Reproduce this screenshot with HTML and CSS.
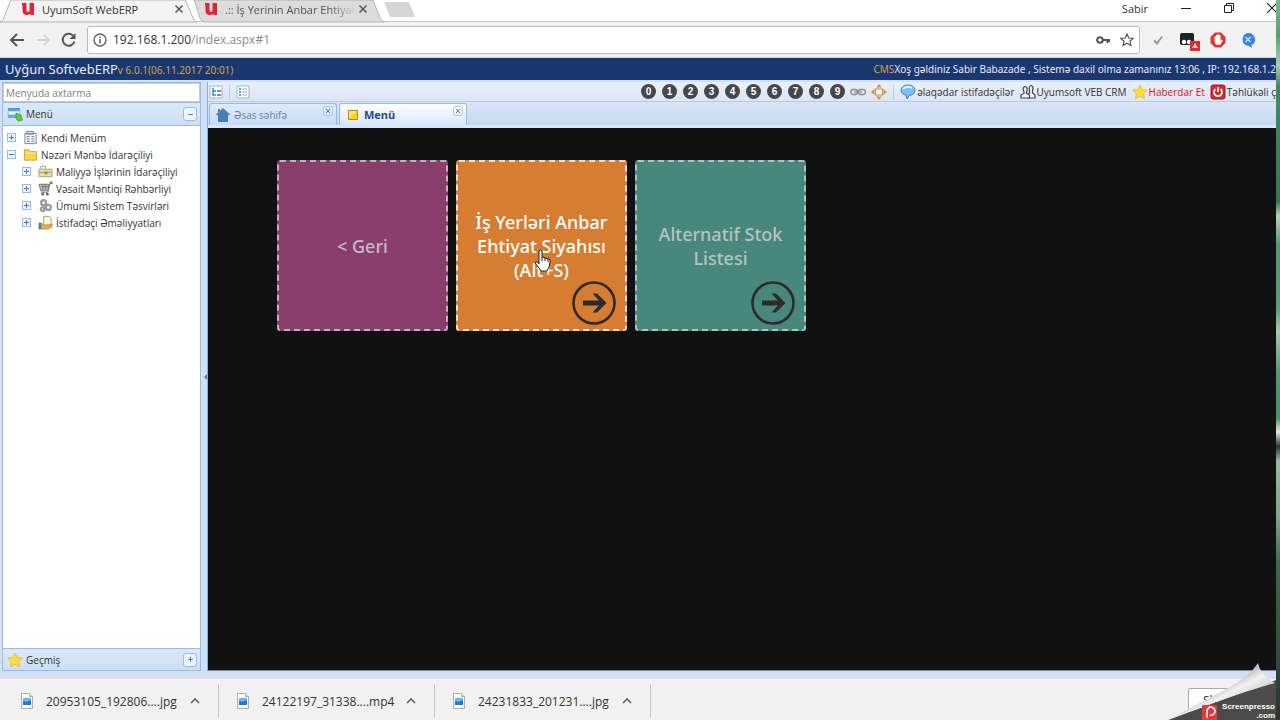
FILE: index.html
```
<!DOCTYPE html>
<html lang="az">
<head>
    <meta charset="UTF-8">
    <meta name="viewport" content="width=device-width, initial-scale=1.0">
    <title>UyumSoft WebERP</title>
    <link rel="stylesheet" href="styles.css">
</head>
<body>
    <!-- Shared icons -->
    <svg class="sprite" aria-hidden="true">
        <symbol id="logo-u" viewBox="0 0 14 14">
            <path d="M1 1h4.500v7q0 2 1.500 2t1.500-2V1H13v12H9.500v-1.500Q8.500 13 6 13 1.500 13 1.500 8.500V3.500H1z" fill="currentColor"/>
        </symbol>
        <symbol id="close" viewBox="0 0 10 10">
            <path d="M1.500 1.500l7 7m0-7l-7 7" stroke="currentColor" stroke-width="1.500"/>
        </symbol>
        <symbol id="chevron" viewBox="0 0 10 6">
            <path d="M1 5l4-4 4 4" fill="none" stroke="#5f6368" stroke-width="1.600"/>
        </symbol>
        <symbol id="star" viewBox="0 0 16 16">
            <path d="M8 1l2.200 4.500 5 .7-3.600 3.500.9 5L8 12.300l-4.500 2.400.9-5L.8 6.200l5-.7z" fill="#ffdf2e" stroke="#e8b93c" stroke-width=".8" stroke-linejoin="round"/>
        </symbol>
        <symbol id="arrow-circle" viewBox="0 0 44 44">
            <circle cx="22" cy="22" r="20.500" fill="none" stroke="#2c2b2a" stroke-width="2.600"/>
            <path d="M11 19.500h16L20.500 12.500h4.500l9.500 9.500-9.500 9.500h-4.500l6.500-7H11z" fill="#2c2b2a"/>
        </symbol>
        <symbol id="file" viewBox="0 0 14 16">
            <path d="M1.500.5h8l3 3v12h-11z" fill="#fff" stroke="#a6adb5"/>
            <path d="M9.500.5v3h3" fill="#e4e8ec" stroke="#a6adb5"/>
            <path d="M3 5h8v7H3z" fill="#1f78cf"/>
            <path d="M3 5h8v2l-4 2-4-1z" fill="#6bb5f0"/>
        </symbol>
    </svg>

    <div class="window">
        <!-- Browser tabs -->
        <header class="tab-strip">
            <div class="browser-tab active">
                <svg class="tab-shape" viewBox="0 0 200 22" preserveAspectRatio="none"><path d="M0 22q3-1 4-4L11 0h180l8 18q1 3 4 4z" fill="#f3f3f3" stroke="#b4b4b4"/></svg>
                <svg class="logo"><use href="#logo-u"/></svg>
                <a href="#1">UyumSoft WebERP</a>
                <button class="tab-close" aria-label="Close"><svg><use href="#close"/></svg></button>
            </div>
            <div class="browser-tab">
                <svg class="tab-shape" viewBox="0 0 190 22" preserveAspectRatio="none"><path d="M0 0l6 18q1 3 4 4h180q-3-1-4-4L179 0z" fill="#dcdcdc" stroke="#b4b4b4"/></svg>
                <svg class="logo"><use href="#logo-u"/></svg>
                <a href="#2" class="faded">.:: İş Yerinin Anbar Ehtiyat</a>
                <button class="tab-close" aria-label="Close"><svg><use href="#close"/></svg></button>
            </div>
            <button class="new-tab" aria-label="New tab"></button>
            <div class="window-buttons">
                <span class="profile">Sabir</span>
                <button aria-label="Minimize"><svg viewBox="0 0 10 10"><path d="M0 5.500h10" stroke="#222"/></svg></button>
                <button aria-label="Restore"><svg viewBox="0 0 10 10"><path d="M.5 2.500h7v7h-7zM2.500 2V.5h7v7H8" fill="none" stroke="#222"/></svg></button>
                <button aria-label="Close window"><svg viewBox="0 0 10 10"><path d="M0 0l10 10M10 0L0 10" stroke="#222" stroke-width="1.200"/></svg></button>
            </div>
        </header>

        <!-- Address bar -->
        <div class="nav-bar">
            <button aria-label="Back"><svg viewBox="0 0 16 16"><path d="M15 8H2m6-6L2 8l6 6" fill="none" stroke="#555" stroke-width="2"/></svg></button>
            <button aria-label="Forward"><svg viewBox="0 0 16 16"><path d="M2 8h12M9 3l5 5-5 5" fill="none" stroke="#d2d2d2" stroke-width="2"/></svg></button>
            <button aria-label="Reload"><svg viewBox="0 0 16 16"><path d="M13.500 9.500A6 6 0 1 1 12 3.500" fill="none" stroke="#555" stroke-width="2"/><path d="M14.500 1v6h-6z" fill="#555"/></svg></button>
            <div class="address">
                <svg viewBox="0 0 14 14"><circle cx="7" cy="7" r="6" fill="none" stroke="#5a5a5a" stroke-width="1.300"/><path d="M7 6v4.500M7 3.500V5" stroke="#5a5a5a" stroke-width="1.500"/></svg>
                <a class="url" href="#1">192.168.1.200<span>/index.aspx#1</span></a>
                <svg viewBox="0 0 14 14"><circle cx="4" cy="7" r="2.800" fill="none" stroke="#555" stroke-width="2"/><path d="M7 7h7M11.500 7v3M13 7v2" stroke="#555" stroke-width="2"/></svg>
                <svg viewBox="0 0 14 14"><path d="M7 1l1.800 4 4.400.4-3.300 2.900 1 4.300L7 10.300l-3.900 2.300 1-4.300L.8 5.400 5.200 5z" fill="none" stroke="#555" stroke-width="1.200"/></svg>
            </div>
            <div class="extensions">
                <svg viewBox="0 0 16 16"><path d="M4 8.500l3 3 5-7" fill="none" stroke="#999" stroke-width="1.800"/></svg>
                <svg viewBox="0 0 16 16" class="tamper"><rect x="0" y="1" width="14" height="12" rx="2" fill="#222"/><circle cx="4" cy="10" r="2.200" fill="#fff"/><circle cx="9" cy="10" r="2.200" fill="#fff"/><path d="M10 9h10v10H10z" fill="#dd2c2c"/><path d="M15 11l3 5h-6z" fill="#ffd5d0"/></svg>
                <svg viewBox="0 0 16 16"><path d="M5 .5h6L15.500 5v6L11 15.500H5L.5 11V5z" fill="#e0343a"/><path d="M4.500 8.500V4.500H6V3h1.500v-.8H9V3h1.500v6l1.200-1.500 1.300.5-2.500 4.800H7Q4.500 12 4.500 8.500z" fill="#fff"/></svg>
                <svg viewBox="0 0 16 16"><path d="M8 1a6.800 6.500 0 0 1 3.500 12.200L12 16l-4-2.200A6.500 6.500 0 0 1 8 1z" fill="#3b82ee"/><path d="M5.500 5l5 5m0-5l-5 5" stroke="#d5e5ff" stroke-width="1.300"/></svg>
            </div>
        </div>

        <!-- Application title bar -->
        <div class="app-header">
            <div><span class="app-name">Uyğun SoftvebERP</span><span class="version">v 6.0.1(06.11.2017 20:01)</span></div>
            <div class="welcome"><span>CMS</span>Xoş gəldiniz Sabir Babazade , Sistemə daxil olma zamanınız 13:06 , IP: 192.168.1.2</div>
        </div>

        <main class="workspace">
            <!-- Left menu -->
            <aside class="sidebar">
                <input type="text" class="menu-search" placeholder="Menyuda axtarma" aria-label="Menyuda axtarma">
                <div class="panel-title">
                    <svg viewBox="0 0 16 16"><path d="M1 2h12v3H1z" fill="#4d9bd6"/><path d="M1 5h12v4H1z" fill="#e4f2fb" stroke="#85adc9" stroke-width=".7"/><path d="M1 9h12v3H1z" fill="#65aede"/><path d="M9 7l5 2 1.500 5-4 1L9 13z" fill="#58cf34" stroke="#35942a" stroke-width=".7"/></svg>
                    <span>Menü</span>
                    <button class="tool minus" aria-label="Yığ"></button>
                </div>
                <ul class="tree">
                    <li>
                        <button class="toggle plus" aria-label="Aç"></button>
                        <svg viewBox="0 0 16 16"><path d="M2 3.500h12v11H2zM4 1.500h7v3H4z" fill="#f5f6fb" stroke="#7a7fa4"/><path d="M4 7h3m2 0h3M4 9.500h3m2 0h3M4 12h3m2 0h3" stroke="#6971a4"/></svg>
                        <a href="#kendi">Kendi Menüm</a>
                    </li>
                    <li>
                        <button class="toggle minus" aria-label="Bağla"></button>
                        <svg viewBox="0 0 16 16"><path d="M1.500 3h5l1.500 2h6.500v9h-13z" fill="#f8d548" stroke="#c9a32c"/><path d="M3 6.500h10.500" stroke="#fff0a2"/></svg>
                        <a href="#menbe">Nəzəri Mənbə İdarəçiliyi</a>
                    </li>
                    <li class="child">
                        <button class="toggle plus" aria-label="Aç"></button>
                        <svg viewBox="0 0 16 16"><path d="M1 5.500h14v8H1z" fill="#e6dca5" stroke="#aba474"/><path d="M3 5V2.500h5V5M1 9h14" fill="none" stroke="#9d997c"/><path d="M7 8h3v3H7z" fill="#789d50"/></svg>
                        <a href="#maliyye">Maliyyə İşlərinin İdarəçiliyi</a>
                    </li>
                    <li class="child">
                        <button class="toggle plus" aria-label="Aç"></button>
                        <svg viewBox="0 0 16 16"><path d="M1 3.500h11l-1.500 7H3z" fill="#b9b9bb" stroke="#77777a"/><path d="M15.500 2h-2.500l-2.500 10H3M4 6h7M5 3v7M8 3v7" fill="none" stroke="#77777a"/><circle cx="5" cy="14" r="1.500" fill="#666"/><circle cx="10" cy="14" r="1.500" fill="#666"/><circle cx="14" cy="2" r="1.500" fill="#b15d4b"/></svg>
                        <a href="#vesait">Vəsait Məntiqi Rəhbərliyi</a>
                    </li>
                    <li class="child">
                        <button class="toggle plus" aria-label="Aç"></button>
                        <svg viewBox="0 0 16 16"><g fill="none" stroke="#999" stroke-width="2.400"><circle cx="6" cy="5" r="2.700"/><circle cx="11" cy="10" r="2.700"/><circle cx="5" cy="12" r="2"/></g></svg>
                        <a href="#umumi">Ümumi Sistem Təsvirləri</a>
                    </li>
                    <li class="child">
                        <button class="toggle plus" aria-label="Aç"></button>
                        <svg viewBox="0 0 16 16"><path d="M6 1.500h6l2 2v8H6z" fill="#fff6d8" stroke="#b29c6c"/><path d="M1 9h3l3 1.500h5l3-1v3L11 15H1z" fill="#e3b14f" stroke="#a97a30" stroke-width=".7"/><path d="M1 8h2.500v7H1z" fill="#3a83b8"/></svg>
                        <a href="#istifadeci">İstifadəçi Əməliyyatları</a>
                    </li>
                </ul>
                <div class="panel-title history">
                    <svg><use href="#star"/></svg>
                    <span>Geçmiş</span>
                    <button class="tool plus" aria-label="Aç"></button>
                </div>
            </aside>

            <button class="splitter" aria-label="Paneli gizlət"></button>

            <section class="content">
                <div class="toolbar">
                    <button class="icon-button" aria-label="Ağac"><svg viewBox="0 0 14 14"><path d="M1 1h12v12H1z" fill="#fff" stroke="#9cb4cd"/><path d="M4 3v7h3M4 6h3" fill="none" stroke="#3989bf" stroke-width="1.500"/><path d="M8 6h4M8 10h4" stroke="#6a6287" stroke-width="1.500"/></svg></button>
                    <span class="divider"></span>
                    <button class="icon-button" aria-label="Siyahı"><svg viewBox="0 0 14 14"><path d="M1 1h12v12H1z" fill="#fff" stroke="#9cb4cd"/><path d="M3 4h2M3 7h2M3 10h2" stroke="#2d7ebd" stroke-width="1.500"/><path d="M6 4h5M6 7h5M6 10h5" stroke="#93afc7"/></svg></button>
                    <div class="digits">
                        <button>0</button><button>1</button><button>2</button><button>3</button><button>4</button>
                        <button>5</button><button>6</button><button>7</button><button>8</button><button>9</button>
                    </div>
                    <svg viewBox="0 0 16 16"><g fill="none" stroke="#8c8c8c" stroke-width="1.300"><rect x=".7" y="5.500" width="7" height="5" rx="2.500"/><rect x="8.300" y="5.500" width="7" height="5" rx="2.500"/><path d="M4 8h8"/></g></svg>
                    <svg viewBox="0 0 16 16"><path d="M8 0l3 3.500H5zM8 16l3-3.500H5zM0 8l3.500-3v6zM16 8l-3.500-3v6z" fill="#e19042"/><rect x="4.500" y="5" width="7" height="6" fill="#fff8e8" stroke="#bc8c58"/></svg>
                    <span class="divider"></span>
                    <a href="#users"><svg viewBox="0 0 16 16"><path d="M8 1c9 0 9 10 1 10.500L7 15l-1-3.800C-1.500 9.500 0 1 8 1z" fill="#78c1f5" stroke="#3c84c4"/><path d="M3 5q4-4 9-1" fill="none" stroke="#e2f5ff" stroke-width="2"/></svg>əlaqədar istifadəçilər</a>
                    <a href="#crm"><svg viewBox="0 0 16 16"><g fill="#eef1f6" stroke="#42464c" stroke-width="1.200"><path d="M7.500 12q0-2.500 2-3V7q-1-5 1.500-5.500 3 .5 1.500 5.500v2l2.500 2v3H8z"/><path d="M1 14v-3l3-1.500V8q-2-5 1-5.500 3.500.5 1.500 5.500v1.500l3 1.500v3z"/></g></svg>Uyumsoft VEB CRM</a>
                    <a href="#notify" class="alert"><svg><use href="#star"/></svg>Haberdar Et</a>
                    <a href="#exit"><svg viewBox="0 0 16 16"><rect x="1" y="1" width="14" height="14" rx="2" fill="#d4282d" stroke="#a21c21"/><path d="M5.500 5a4 4 0 1 0 5 0M8 3v5" fill="none" stroke="#fff" stroke-width="1.700"/></svg>Təhlükəli ç</a>
                </div>

                <nav class="page-tabs">
                    <div class="page-tab">
                        <svg viewBox="0 0 16 16"><path d="M8 1l7.500 7H13v7H3V8H.5z" fill="#487fb8"/><path d="M3 2h2v3H3z" fill="#487fb8"/></svg>
                        <a href="#home">Əsas səhifə</a>
                        <button class="page-close" aria-label="Bağla"><svg><use href="#close"/></svg></button>
                    </div>
                    <div class="page-tab active">
                        <svg viewBox="0 0 16 16"><path d="M3.500 3.500h9v9h-9z" fill="#ffd21c" stroke="#b9851a"/><path d="M4 4h8L4 11z" fill="#ffe971"/></svg>
                        <a href="#menu">Menü</a>
                        <button class="page-close" aria-label="Bağla"><svg><use href="#close"/></svg></button>
                    </div>
                </nav>

                <div class="tiles">
                    <button class="tile purple">&lt; Geri</button>
                    <button class="tile orange">
                        İş Yerləri Anbar Ehtiyat Siyahısı (Alt+S)
                        <svg class="tile-arrow"><use href="#arrow-circle"/></svg>
                        <svg class="pointer" viewBox="0 0 17 23"><path d="M5 2q2-2 3 0v6l7 2q1.500.5 1 3l-1 5-2 4H7l-2-3-4-5q0-2 2-1l2 2z" fill="#fff" stroke="#222"/><path d="M8 8v4m3-3v3m3-2v3" stroke="#222"/></svg>
                    </button>
                    <button class="tile green">
                        Alternatif Stok Listesi
                        <svg class="tile-arrow"><use href="#arrow-circle"/></svg>
                    </button>
                </div>
            </section>
        </main>

        <!-- Download shelf -->
        <footer class="downloads">
            <div class="download"><svg class="file"><use href="#file"/></svg><a href="#d1">20953105_192806....jpg</a><button aria-label="Menu"><svg><use href="#chevron"/></svg></button></div>
            <div class="download"><svg class="file"><use href="#file"/></svg><a href="#d2">24122197_31338....mp4</a><button aria-label="Menu"><svg><use href="#chevron"/></svg></button></div>
            <div class="download"><svg class="file"><use href="#file"/></svg><a href="#d3">24231833_201231....jpg</a><button aria-label="Menu"><svg><use href="#chevron"/></svg></button></div>
            <button class="show-all" aria-label="Show all">Sh</button>
        </footer>

        <!-- Page curl watermark -->
        <div class="watermark">
            <svg viewBox="0 0 108 60">
                <defs>
                    <linearGradient id="curl" x1="0" y1="0" x2="1" y2="1">
                        <stop offset="0.300" stop-color="#777"/>
                        <stop offset="0.550" stop-color="#f2f2f2"/>
                        <stop offset="0.850" stop-color="#a5a5a5"/>
                    </linearGradient>
                </defs>
                <path d="M0 60L108 20v40z" fill="#4b4b4b"/>
                <path d="M0 60L60 28Q82 16 90 3q2 12 17 20Q55 38 0 60z" fill="url(#curl)"/>
                <rect x="34" y="45" width="15" height="15" rx="1" fill="#e5383b"/>
                <path d="M39 58v-7a4 4 0 1 1 3 4" fill="none" stroke="#fff" stroke-width="1.500"/>
            </svg>
            <p><span>Screenpresso</span><span>.com</span></p>
        </div>
    </div>
    <div class="desktop-edge"></div>
</body>
</html>
```
FILE: styles.css
```
/* General Styles */
* {
    box-sizing: border-box;
}

body {
    margin: 0;
    height: 100vh;
    display: flex;
    overflow: hidden;
    font-family: "Open Sans", "Noto Sans", sans-serif;
    font-size: 10px;
    color: #333;
}

button {
    padding: 0;
    border: none;
    background: none;
    font: inherit;
    color: inherit;
    cursor: pointer;
}

a {
    color: inherit;
    text-decoration: none;
    white-space: nowrap;
}

svg {
    display: block;
    flex: none;
    width: 16px;
    height: 16px;
}

.sprite {
    position: absolute;
    width: 0;
    height: 0;
}

.window {
    position: relative;
    flex: 1;
    min-width: 0;
    display: flex;
    flex-direction: column;
    overflow: hidden;
    background-color: #f2f2f2;
}

.desktop-edge {
    width: 4px;
    background: linear-gradient(#79b68e, #4da56c 5%, #a9cdb5 9%, #3f8d5f 12%, #2f7c50 28%, #b9cfc0 30%, #4c9a6e 34%, #55a077 43%, #a9c6b5 46%, #4c9a6e 52%, #3d9468 58%, #dfe8e2 60%, #26362e 62%, #9cb9a8 64%, #7ba58d 72%, #3d6b51 78%, #26362e);
}

/* Browser tabs */
.tab-strip {
    flex: none;
    display: flex;
    height: 22px;
    background-color: #fff;
    border-bottom: 1px solid #c4c4c4;
    font-size: 11px;
}

.browser-tab {
    position: relative;
    display: flex;
    align-items: center;
    width: 190px;
    height: 22px;
    padding: 0 16px 4px 10px;
    color: #555;
}

.browser-tab.active {
    z-index: 1;
    width: 194px;
    padding-left: 21px;
    padding-right: 10px;
    color: #333;
}

.browser-tab > * {
    position: relative;
}

.browser-tab .tab-shape {
    position: absolute;
    inset: 0;
    width: 100%;
    height: 100%;
    overflow: visible;
}

.logo {
    width: 14px;
    height: 14px;
    margin-right: 7px;
    color: #df2638;
}

.browser-tab a {
    flex: 1;
    min-width: 0;
    overflow: hidden;
}

.faded {
    margin-right: 2px;
    mask-image: linear-gradient(to right, #000 80%, transparent);
}

.tab-close {
    color: #555;
}

.tab-close svg {
    width: 10px;
    height: 10px;
}

.new-tab {
    width: 31px;
    height: 15px;
    margin-top: 2px;
    background-color: #d5d5d5;
    clip-path: polygon(0 0, 80% 0, 100% 100%, 20% 100%);
}

.window-buttons {
    display: flex;
    align-items: center;
    gap: 33px;
    height: 16px;
    margin-left: auto;
    margin-right: -1px;
}

.window-buttons svg {
    width: 10px;
    height: 10px;
}

/* Address bar */
.nav-bar {
    flex: none;
    display: flex;
    align-items: center;
    height: 36px;
    padding: 0 20px 0 9px;
    gap: 10px;
    border-bottom: 1px solid #cfd6d0;
}

.address {
    flex: 1;
    display: flex;
    align-items: center;
    gap: 10px;
    height: 28px;
    padding: 0 5px;
    background-color: #fff;
    border: 1px solid #bbb;
    border-radius: 3px;
    font-size: 12px;
}

.address svg {
    width: 14px;
    height: 14px;
}

.url {
    flex: 1;
    margin-left: -4px;
}

.url span {
    color: #8a8a8a;
}

.extensions {
    display: flex;
    gap: 14px;
}

.tamper {
    overflow: visible;
}

/* Application title bar */
.app-header {
    flex: none;
    display: flex;
    justify-content: space-between;
    align-items: center;
    height: 22px;
    padding-left: 5px;
    background-color: #1b376f;
    color: #e7edf8;
    white-space: nowrap;
    font-family: "Noto Sans", sans-serif;
}

.app-name {
    font-size: 13px;
}

.version,
.welcome span {
    color: #d3a04b;
}

/* Workspace */
.workspace {
    flex: 1;
    min-height: 0;
    display: flex;
    padding: 2px 0 7px 2px;
    background-color: #d3e1f5;
}

.sidebar {
    flex: none;
    display: flex;
    flex-direction: column;
    width: 199px;
    border: 1px solid #99bbe8;
    background-color: #fff;
}

.menu-search {
    flex: none;
    height: 19px;
    padding: 0 2px;
    border: 1px solid #c3ccd8;
    font: inherit;
}

.menu-search::placeholder {
    color: #808080;
    opacity: 1;
}

.panel-title {
    flex: none;
    display: flex;
    align-items: center;
    gap: 3px;
    height: 24px;
    padding: 0 3px 0 4px;
    border-top: 1px solid #99bbe8;
    border-bottom: 1px solid #99bbe8;
    background: linear-gradient(#dce8f8, #cddff5);
}

.panel-title.history {
    height: 22px;
    border-bottom: none;
}

.tool,
.toggle {
    flex: none;
    position: relative;
    border: 1px solid #9dbbe0;
    background-color: #eef5fd;
}

.tool {
    width: 14px;
    height: 14px;
    margin-left: auto;
    border-radius: 3px;
}

.toggle {
    width: 9px;
    height: 9px;
    margin-right: 4px;
}

.minus::before,
.plus::before,
.plus::after {
    content: "";
    position: absolute;
    inset: 0;
    margin: auto;
    width: 5px;
    height: 1px;
    background-color: #467ab8;
}

.plus::after {
    width: 1px;
    height: 5px;
}

.tree {
    flex: 1;
    margin: 0;
    padding: 3px 4px;
    list-style: none;
}

.tree li {
    display: flex;
    align-items: center;
    gap: 3px;
    height: 17px;
}

.tree .child {
    padding-left: 15px;
}

.tree svg {
    width: 15px;
    height: 15px;
}

.splitter {
    flex: none;
    width: 6px;
    background-color: #d3e1f5;
}

.splitter::before {
    content: "";
    display: block;
    border: 3px solid transparent;
    border-right-color: #5a7ead;
}

/* Content area */
.content {
    flex: 1;
    min-width: 0;
    display: flex;
    flex-direction: column;
    border-left: 1px solid #8faedb;
    border-bottom: 1px solid #7189ad;
}

.toolbar {
    flex: none;
    display: flex;
    align-items: center;
    gap: 5px;
    height: 20px;
    padding-left: 1px;
    overflow: hidden;
    background: linear-gradient(#eaf0f9, #dce5f3);
    border-bottom: 1px solid #b7cbe7;
}

.toolbar a {
    display: flex;
    align-items: center;
    gap: 1px;
}

.icon-button svg {
    width: 14px;
    height: 14px;
}

.divider {
    width: 1px;
    height: 14px;
    margin: 0 1px;
    background-color: #b9c9e0;
}

.digits {
    display: flex;
    gap: 6px;
    margin-left: auto;
}

.digits button {
    width: 15px;
    height: 15px;
    border-radius: 50%;
    background-color: #45484a;
    color: #fff;
    font-family: "Liberation Sans", Arial, sans-serif;
    font-weight: bold;
    line-height: 15px;
}

.alert {
    color: #e3111d;
}

.page-tabs {
    flex: none;
    display: flex;
    align-items: flex-end;
    gap: 2px;
    height: 26px;
    padding-left: 1px;
    background: linear-gradient(#dae4f5, #c9d9f1);
    border-bottom: 3px solid #d9e7fa;
}

.page-tab {
    display: flex;
    align-items: center;
    gap: 3px;
    width: 128px;
    height: 22px;
    padding: 0 3px 0 5px;
    border: 1px solid #9bb8df;
    border-bottom: none;
    border-radius: 3px 3px 0 0;
    background: linear-gradient(#dfebfb, #c8dbf4);
    color: #6a7f9f;
}

.page-tab.active {
    background: linear-gradient(#fff, #d9e7fa);
    color: #244b88;
    font-size: 11px;
    font-weight: bold;
}

.page-close {
    align-self: flex-start;
    margin-top: 2px;
    margin-left: auto;
    padding: 1px;
    border: 1px solid #b7c9e1;
    border-radius: 2px;
    color: #566f92;
}

.page-close svg {
    width: 6px;
    height: 6px;
}

/* Tiles */
.tiles {
    flex: 1;
    display: flex;
    flex-wrap: wrap;
    align-content: flex-start;
    gap: 8px;
    padding: 32px 69px;
    background-color: #111;
}

.tile {
    position: relative;
    width: 171px;
    height: 171px;
    padding: 0 14px;
    border: 2px dashed #c0b3ba;
    border-radius: 3px;
    color: #c8b9c8;
    font-family: "Noto Sans", sans-serif;
    font-size: 18px;
    font-weight: 500;
    line-height: 24px;
}

.purple {
    background-color: #893e6b;
}

.orange {
    background-color: #d67d31;
    border-color: #f0e0d0;
    color: #fff;
}

.green {
    background-color: #47877d;
    border-color: #aec5bf;
    color: #b4c4c4;
}

.tile-arrow {
    position: absolute;
    right: 9px;
    bottom: 4px;
    width: 44px;
    height: 44px;
}

.pointer {
    position: absolute;
    top: 87px;
    left: 76px;
    width: 17px;
    height: 23px;
}

/* Download shelf */
.downloads {
    flex: none;
    display: flex;
    align-items: center;
    height: 42px;
    padding: 3px 0 0 3px;
    background-color: #f1f1f1;
    border-top: 1px solid #ddd;
    font-size: 12px;
}

.download {
    display: flex;
    align-items: center;
    width: 216px;
    height: 34px;
    padding: 0 18px 0 17px;
    border-right: 1px solid #c8c8c8;
}

.download a {
    flex: 1;
    margin-left: 12px;
}

.download .file {
    width: 14px;
}

.download button svg {
    width: 10px;
    height: 6px;
}

.show-all {
    width: 80px;
    height: 26px;
    margin-left: auto;
    margin-right: 8px;
    padding-left: 14px;
    border: 1px solid #aaa;
    border-radius: 2px;
    background-color: #fff;
    line-height: 20px;
    text-align: left;
}

.watermark {
    position: absolute;
    right: 0;
    bottom: 0;
    width: 108px;
    height: 60px;
}

.watermark svg {
    width: 108px;
    height: 60px;
}

.watermark p {
    position: absolute;
    right: 1px;
    bottom: 0;
    display: flex;
    flex-direction: column;
    align-items: flex-end;
    margin: 0;
    color: #fff;
    font-family: "Liberation Sans", Arial, sans-serif;
    font-size: 8px;
    font-weight: bold;
    line-height: 9px;
}
```
